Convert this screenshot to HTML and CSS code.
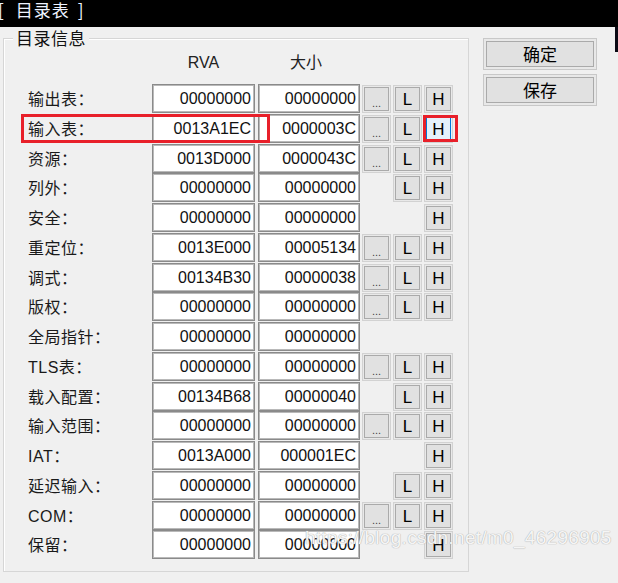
FILE: index.html
```html
<!DOCTYPE html>
<html lang="zh-CN">
<head>
    <meta charset="UTF-8">
    <title>目录表</title>
    <link rel="stylesheet" href="styles.css">
</head>
<body>
    <div class="window">
        <div class="titlebar">
            <span class="br-l">[</span><span class="title">目录表</span><span class="br-r">]</span>
        </div>
        <div class="main">
            <div class="group">
                <div class="legend">目录信息</div>
                <div class="grid">
                    <span></span><div class="head">RVA</div><div class="head">大小</div><span></span><span></span><span></span>

                    <div class="label">输出表：</div><div class="field">00000000</div><div class="field">00000000</div><div class="btn dots">...</div><div class="btn">L</div><div class="btn">H</div>
                    <div class="label">输入表：</div><div class="field">0013A1EC</div><div class="field">0000003C</div><div class="btn dots">...</div><div class="btn">L</div><div class="btn active">H</div>
                    <div class="label">资源：</div><div class="field">0013D000</div><div class="field">0000043C</div><div class="btn dots">...</div><div class="btn">L</div><div class="btn">H</div>
                    <div class="label">列外：</div><div class="field">00000000</div><div class="field">00000000</div><span></span><div class="btn">L</div><div class="btn">H</div>
                    <div class="label">安全：</div><div class="field">00000000</div><div class="field">00000000</div><span></span><span></span><div class="btn">H</div>
                    <div class="label">重定位：</div><div class="field">0013E000</div><div class="field">00005134</div><div class="btn dots">...</div><div class="btn">L</div><div class="btn">H</div>
                    <div class="label">调式：</div><div class="field">00134B30</div><div class="field">00000038</div><div class="btn dots">...</div><div class="btn">L</div><div class="btn">H</div>
                    <div class="label">版权：</div><div class="field">00000000</div><div class="field">00000000</div><div class="btn dots">...</div><div class="btn">L</div><div class="btn">H</div>
                    <div class="label">全局指针：</div><div class="field">00000000</div><div class="field">00000000</div><span></span><span></span><span></span>
                    <div class="label">TLS表：</div><div class="field">00000000</div><div class="field">00000000</div><div class="btn dots">...</div><div class="btn">L</div><div class="btn">H</div>
                    <div class="label">载入配置：</div><div class="field">00134B68</div><div class="field">00000040</div><span></span><div class="btn">L</div><div class="btn">H</div>
                    <div class="label">输入范围：</div><div class="field">00000000</div><div class="field">00000000</div><div class="btn dots">...</div><div class="btn">L</div><div class="btn">H</div>
                    <div class="label">IAT：</div><div class="field">0013A000</div><div class="field">000001EC</div><span></span><span></span><div class="btn">H</div>
                    <div class="label">延迟输入：</div><div class="field">00000000</div><div class="field">00000000</div><span></span><div class="btn">L</div><div class="btn">H</div>
                    <div class="label">COM：</div><div class="field">00000000</div><div class="field">00000000</div><div class="btn dots">...</div><div class="btn">L</div><div class="btn">H</div>
                    <div class="label">保留：</div><div class="field">00000000</div><div class="field">00000000</div><span></span><span></span><div class="btn">H</div>
                </div>
            </div>
            <div class="side">
                <div class="big-btn">确定</div>
                <div class="big-btn">保存</div>
            </div>
            <div class="edge"></div>
        </div>

        <!-- red marks drawn over the dialog -->
        <div class="mark mark-row"></div>
        <div class="mark mark-btn"></div>
        <div class="watermark">https://blog.csdn.net/m0_46296905</div>
    </div>
</body>
</html>
```

FILE: styles.css
```css
body {
    margin: 0;
    padding: 0;
    background-color: #f0f0f0;
    font-family: "Liberation Sans", "Noto Sans CJK SC", sans-serif;
    color: #1a1a1a;
}

.window {
    position: relative;
    width: 618px;
    height: 583px;
    overflow: hidden;
    background-color: #f0f0f0;
}

.titlebar {
    height: 27px;
    background-color: #000;
    color: #eef3ff;
    display: flex;
    align-items: flex-start;
    font-family: "Noto Sans CJK SC", sans-serif;
    font-size: 17px;
    line-height: 20px;
}

.br-l {
    margin-left: -2px;
}

.title {
    margin-left: 12px;
    letter-spacing: 1px;
}

.br-r {
    margin-left: 8px;
}

.main {
    display: flex;
    align-items: flex-start;
}

.group {
    box-sizing: border-box;
    margin-left: 3px;
    margin-top: 11px;
    width: 466px;
    height: 534px;
    border: 1px solid #d6d6d6;
    box-shadow: inset 1px 1px 0 #fff;
}

.legend {
    width: fit-content;
    height: 22px;
    margin-top: -12px;
    margin-left: 9px;
    padding: 0 3px;
    background-color: #f0f0f0;
    font-family: "Noto Sans CJK SC", sans-serif;
    font-size: 17px;
    line-height: 22px;
    letter-spacing: 0.5px;
    color: #111;
}

.grid {
    display: grid;
    grid-template-columns: 124px 106px 104px 31px 31px 31px;
    grid-template-rows: 35px repeat(16, 29.75px);
    padding-left: 24px;
}

.head {
    width: 103px;
    padding-top: 3px;
    text-align: center;
    font-family: "Liberation Sans", "Noto Sans CJK SC", sans-serif;
    font-size: 16px;
    line-height: 22px;
    color: #222;
}

.head + .head {
    width: 96px;
}

.label {
    font-family: "Liberation Sans", "Noto Sans CJK SC", sans-serif;
    font-size: 16px;
    line-height: 31px;
    letter-spacing: 0.5px;
    color: #1a1a1a;
}

.field {
    box-sizing: border-box;
    width: 103px;
    height: 29px;
    padding-right: 3px;
    background-color: #fff;
    border: 1px solid #8a8a8a;
    box-shadow: inset 0 0 0 1px #b9b9b9;
    text-align: right;
    font-size: 16px;
    line-height: 27px;
    color: #111;
}

.field + .field {
    width: 102px;
}

.btn {
    box-sizing: border-box;
    width: 29px;
    height: 28px;
    margin-top: 1px;
    background-color: #e1e1e1;
    border: 1px solid #d2d2d2;
    box-shadow: inset 0 0 0 1px #e9e9e9, inset 0 0 0 2px #aaaaaa;
    text-align: center;
    font-size: 17px;
    line-height: 27px;
    color: #000;
}

.btn.dots {
    font-size: 11px;
    line-height: 34px;
    color: #444;
}

.btn.active {
    background-color: #e5f1fb;
    box-shadow: inset 0 0 0 1px #e5f1fb, inset 2px 0 0 #0078d7, inset -2px 0 0 #0078d7;
}

.side {
    display: flex;
    flex-direction: column;
    gap: 4px;
    margin-left: 14px;
    margin-top: 11px;
}

.big-btn {
    box-sizing: border-box;
    width: 114px;
    height: 32px;
    background-color: #e1e1e1;
    border: 1px solid #c8c8c8;
    box-shadow: inset 0 0 0 2px #e8e8e8, inset 0 0 0 3px #aaaaaa;
    text-align: center;
    font-family: "Noto Sans CJK SC", sans-serif;
    font-size: 17px;
    line-height: 30px;
    color: #000;
}

.edge {
    margin-left: auto;
    width: 3px;
    height: 25px;
    background-color: #0a0a14;
}

.mark {
    position: absolute;
    box-sizing: border-box;
    border: 3px solid #e8202a;
}

.mark-row {
    left: 21px;
    top: 114px;
    width: 249px;
    height: 29px;
}

.mark-btn {
    left: 423px;
    top: 115px;
    width: 35px;
    height: 27px;
}

.watermark {
    position: absolute;
    left: 305px;
    top: 527px;
    font-family: "Liberation Sans", sans-serif;
    font-size: 19px;
    line-height: 22px;
    letter-spacing: 0.3px;
    color: rgba(255, 255, 255, 0.9);
    text-shadow: 0 0 1px #b0b0b0, 0 0 1px #b0b0b0;
}
```
